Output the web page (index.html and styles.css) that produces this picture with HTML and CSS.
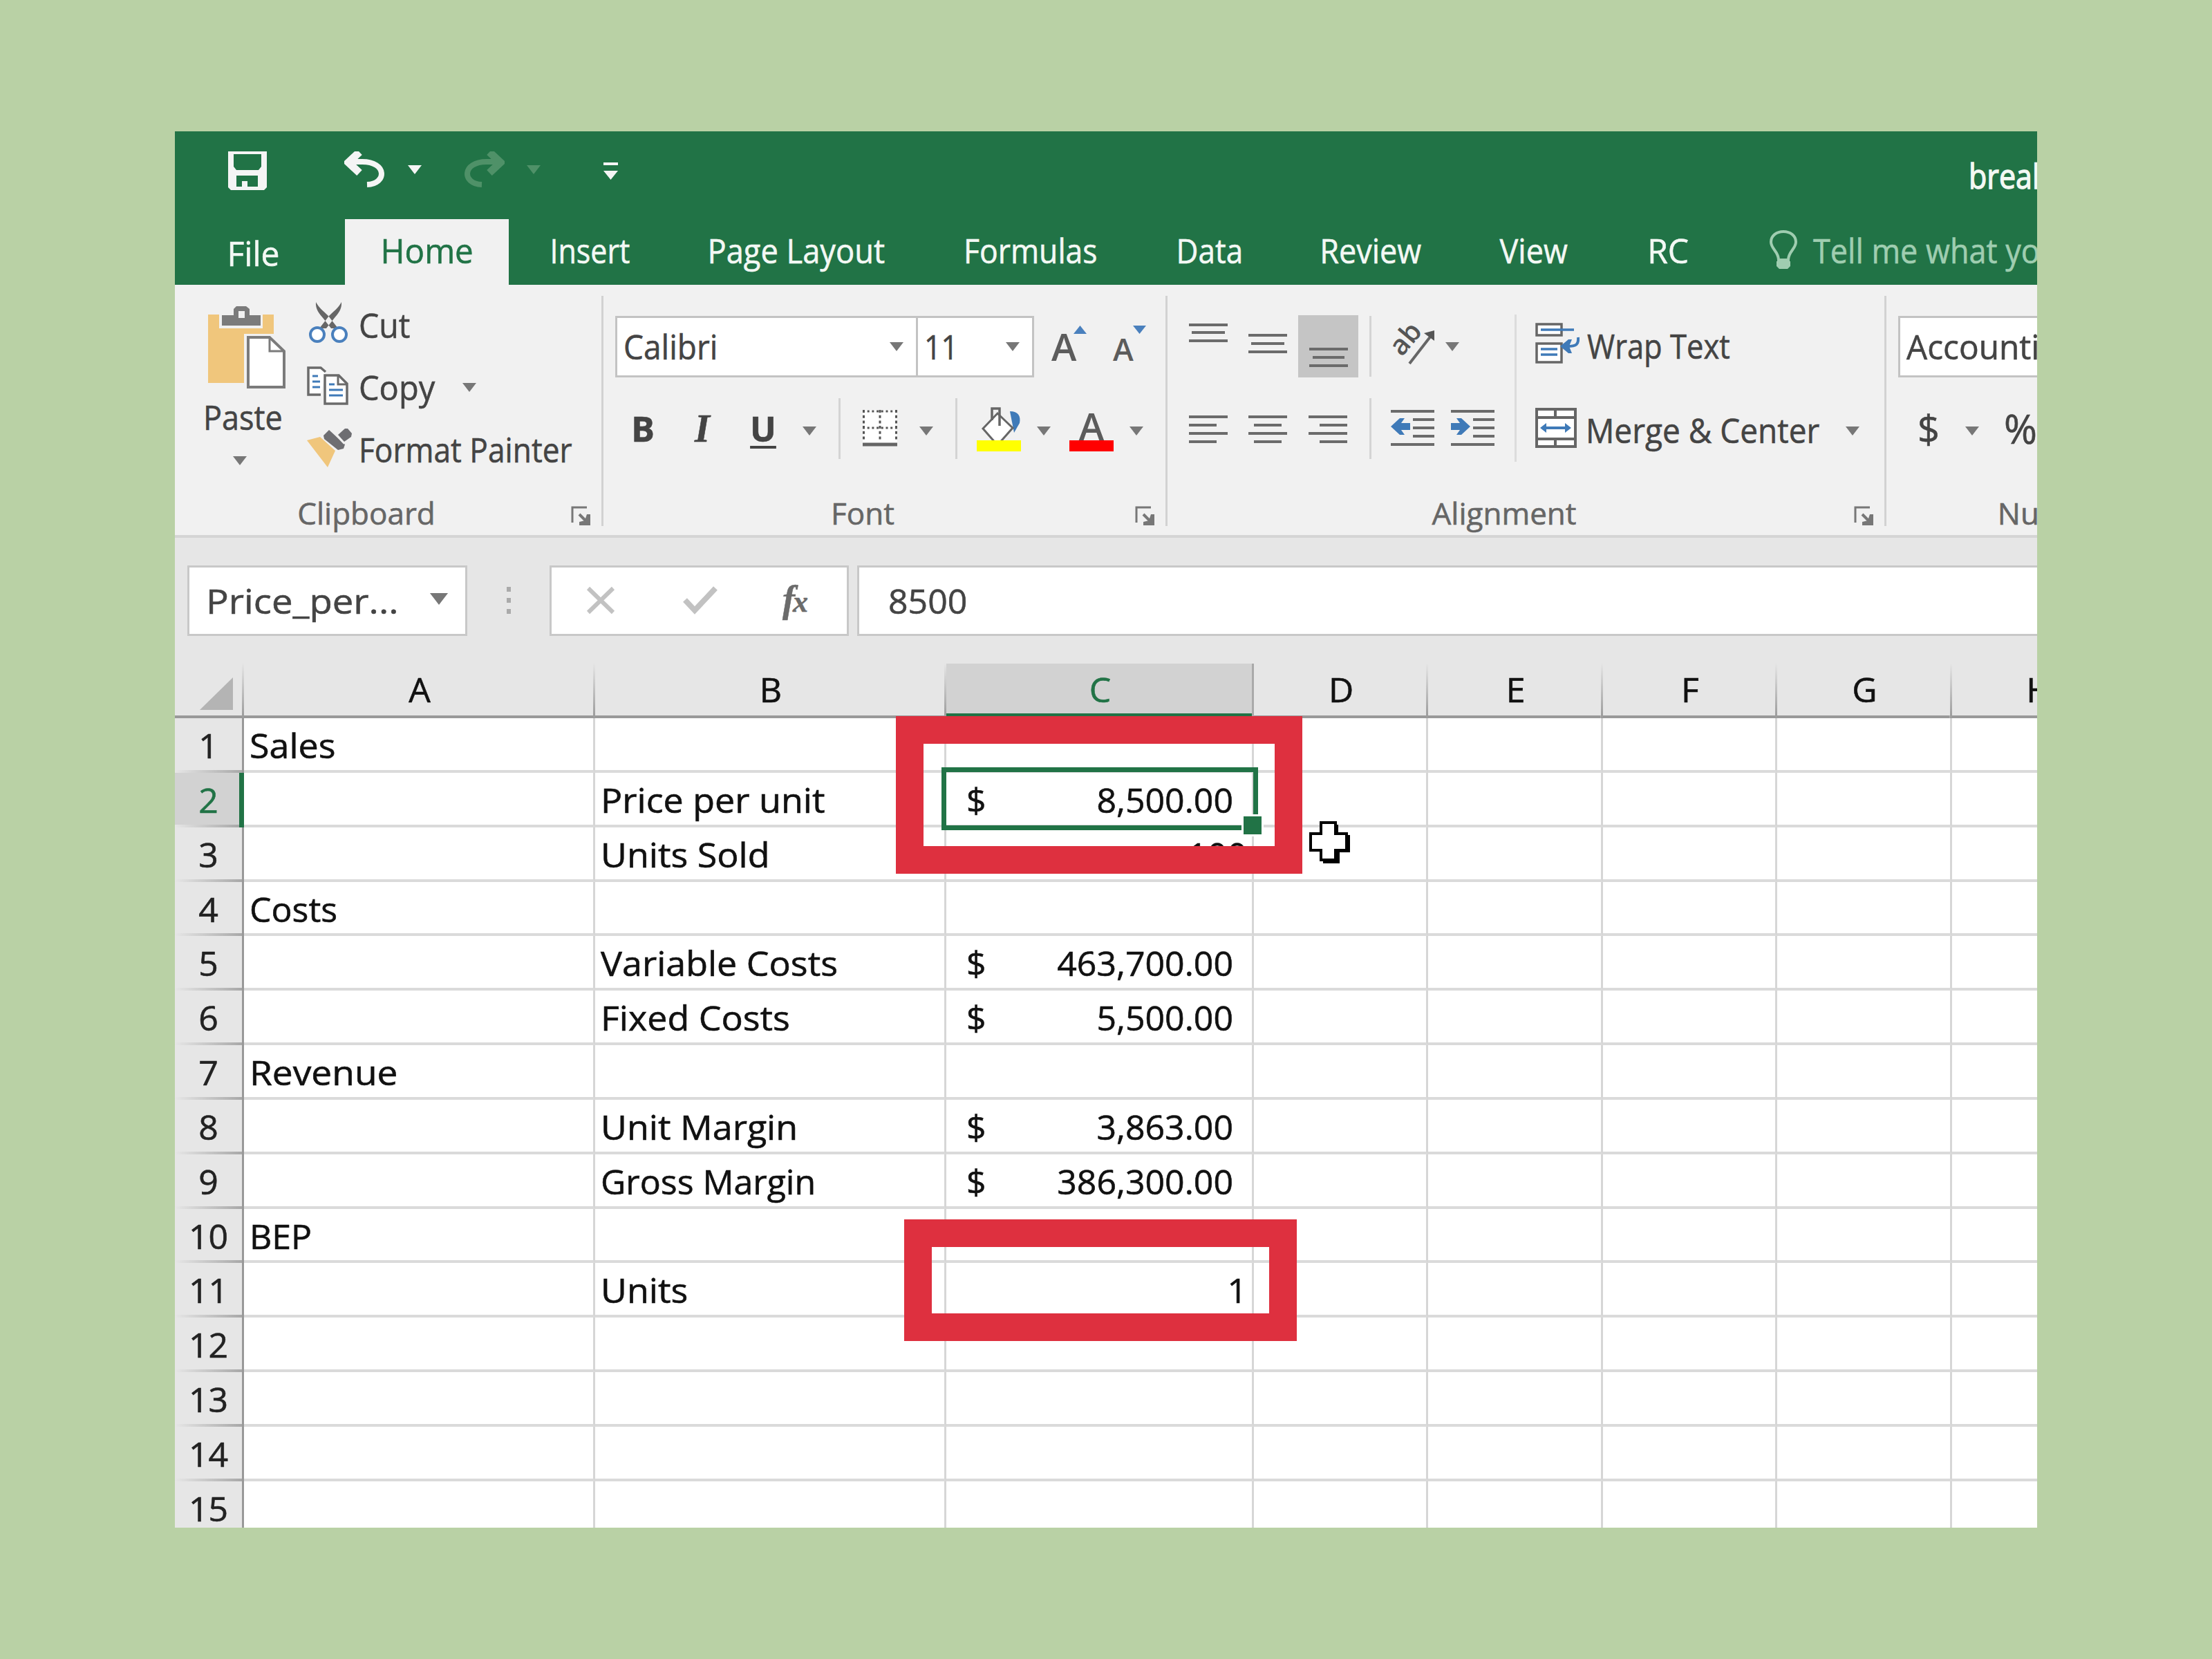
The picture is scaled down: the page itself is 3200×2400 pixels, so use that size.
FILE: index.html
```html
<!DOCTYPE html>
<html lang="en">
<head>
    <meta charset="UTF-8">
    <title>Break-even workbook</title>
    <link rel="stylesheet" href="styles.css">
</head>

<body>
    <svg class="defs" width="0" height="0">
        <symbol id="caret" viewBox="0 0 20 13"><path d="M0 0H20L10 13Z" fill="currentColor"/></symbol>
        <symbol id="launcher" viewBox="0 0 28 28">
            <path d="M2 24V2H23" fill="none" stroke="#777" stroke-width="3"/>
            <path d="M12 12L22 22" stroke="#777" stroke-width="4"/>
            <path d="M28 12V28H12V23L20 21L23 12Z" fill="#777"/>
        </symbol>
    </svg>

    <div class="window">
        <header class="titlebar">
            <div class="qat">
                <svg class="save" width="56" height="56" viewBox="0 0 56 56">
                    <path fill-rule="evenodd" fill="#f5f5f5" d="M0 0H56V52L52 56H4L0 52ZM8 4V22L12 27H44L48 22V4ZM12 35V51H20V43H28V51H43V35Z"/>
                </svg>
                <svg class="undo" width="58" height="52" viewBox="0 0 58 52" fill="none" stroke="#f5f5f5">
                    <path d="M22 1L6 16L22 31" stroke-width="11"/>
                    <path d="M6 15H26C62 15 62 47 33 48" stroke-width="8"/>
                </svg>
                <svg class="caret c1"><use href="#caret"/></svg>
                <svg class="undo redo" width="58" height="52" viewBox="0 0 58 52" fill="none" stroke="#4f9168">
                    <path d="M36 1L52 16L36 31" stroke-width="11"/>
                    <path d="M52 15H32C-4 15 -4 47 25 48" stroke-width="8"/>
                </svg>
                <svg class="caret c2"><use href="#caret"/></svg>
                <svg class="customize" width="22" height="25" viewBox="0 0 22 25" fill="#f5f5f5"><path d="M0 0H21V4H0ZM0 12H21L10.5 25Z"/></svg>
                <span class="doc"><span class="t">break-even</span></span>
            </div>
            <nav class="tabs">
                <a class="tab file"><span class="t">File</span></a>
                <a class="tab home"><span class="t">Home</span></a>
                <a class="tab insert"><span class="t">Insert</span></a>
                <a class="tab layout"><span class="t">Page Layout</span></a>
                <a class="tab formulas"><span class="t">Formulas</span></a>
                <a class="tab data"><span class="t">Data</span></a>
                <a class="tab review"><span class="t">Review</span></a>
                <a class="tab view"><span class="t">View</span></a>
                <a class="tab rc"><span class="t">RC</span></a>
                <svg class="bulb" width="40" height="58" viewBox="0 0 40 58" fill="none" stroke="#9fcdb0" stroke-width="4">
                    <path d="M13 43C13 31 2 27 2 17C2 8 10 2 20 2S38 8 38 17C38 27 27 31 27 43Z"/>
                    <path d="M10 45H30V52L26 56H14L10 52Z" fill="#9fcdb0" stroke="none"/>
                </svg>
                <span class="tell"><span class="t">Tell me what you want to do</span></span>
            </nav>
        </header>

        <section class="ribbon">
            <div class="group clipboard">
                <div class="body">
                    <div class="paste">
                        <svg width="113" height="120" viewBox="0 0 113 120">
                            <path fill="#f0c67c" d="M0 12H16V32H79V12H95V40H52V111H0Z"/>
                            <path fill="#7b7b7b" fill-rule="evenodd" d="M20 13H37V4L41 0H55L60 4V13H76V28H20ZM44 7V17H53V7Z"/>
                            <path fill="#fff" stroke="#7b7b7b" stroke-width="4" d="M58 45H89L110 65V117H58Z"/>
                            <path fill="none" stroke="#7b7b7b" stroke-width="3" d="M89 45V65H110"/>
                        </svg>
                        <span class="t">Paste</span>
                        <svg class="caret"><use href="#caret"/></svg>
                    </div>
                    <div class="edit">
                        <div class="item">
                            <svg width="66" height="90" viewBox="0 0 66 90">
                                <path d="M13 14C12 24 18 31 24 38L35 52H45L31 34C24 27 17 22 13 14ZM50 14C51 24 45 31 39 38L28 52H18L32 34C39 27 46 22 50 14Z" fill="#666"/>
                                <circle cx="15" cy="61" r="10" fill="#fff" stroke="#4a80bd" stroke-width="4"/>
                                <circle cx="47" cy="61" r="10" fill="#fff" stroke="#4a80bd" stroke-width="4"/>
                            </svg>
                            <span class="t cut">Cut</span>
                        </div>
                        <div class="item">
                            <svg width="66" height="90" viewBox="0 0 66 90">
                                <path d="M20 58H2V19H20L27 25" fill="#fff" stroke="#6b6b6b" stroke-width="3.5"/>
                                <path d="M8 31H16M8 39H19M8 47H19" stroke="#3f7ab8" stroke-width="3"/>
                                <path d="M26 30H46L58 42V71H26Z" fill="#fff" stroke="#6b6b6b" stroke-width="3.5"/>
                                <path d="M45 30V43H58" fill="none" stroke="#6b6b6b" stroke-width="3"/>
                                <path d="M32 43H40M32 51H52M32 59H52" stroke="#3f7ab8" stroke-width="3"/>
                            </svg>
                            <span class="t copy">Copy</span>
                            <svg class="caret"><use href="#caret"/></svg>
                        </div>
                        <div class="item">
                            <svg width="66" height="90" viewBox="0 0 66 90">
                                <path d="M0 34L19 29L41 49L30 73Z" fill="#f0c67c"/>
                                <path d="M24 27L32 19L55 40L53 46L45 48L25 32Z" fill="#6e6e72"/>
                                <path d="M45 26L55 17H59L65 24L64 29L54 36Z" fill="#6e6e72"/>
                                <path d="M39 23L54 39" stroke="#f1f1f1" stroke-width="2"/>
                            </svg>
                            <span class="t painter">Format Painter</span>
                        </div>
                    </div>
                </div>
                <div class="footer"><span>Clipboard</span><svg width="28" height="28"><use href="#launcher"/></svg></div>
            </div>

            <div class="group font">
                <div class="row row1">
                    <div class="combo family"><span class="t">Calibri</span><svg class="caret"><use href="#caret"/></svg></div>
                    <div class="combo size"><span class="t">11</span><svg class="caret"><use href="#caret"/></svg></div>
                    <svg class="grow" width="65" height="100" viewBox="0 0 65 100">
                        <text x="5" y="71" class="glyph big">A</text>
                        <path d="M37 32L46.500 20L56 32Z" fill="#4a80bd"/>
                    </svg>
                    <svg class="shrink" width="60" height="100" viewBox="0 0 60 100">
                        <text x="5" y="71" class="glyph small">A</text>
                        <path d="M34 20H53L43.500 32Z" fill="#4a80bd"/>
                    </svg>
                </div>
                <div class="row row2">
                    <b class="btn bold">B</b>
                    <i class="btn italic">I</i>
                    <u class="btn under">U</u>
                    <svg class="caret k1"><use href="#caret"/></svg>
                    <span class="sep s1"></span>
                    <svg class="borders" width="50" height="100" viewBox="0 0 50 100">
                        <rect y="23" width="50" height="48" fill="#fff"/>
                        <path d="M0 25H50M0 49H50" stroke="#555" stroke-width="3" stroke-dasharray="3 3.700"/>
                        <path d="M1.500 23V68M25 23V68M48.500 23V68" stroke="#555" stroke-width="3" stroke-dasharray="4 3.700"/>
                        <path d="M0 73H50" stroke="#666" stroke-width="5"/>
                    </svg>
                    <svg class="caret k1"><use href="#caret"/></svg>
                    <span class="sep s1"></span>
                    <svg class="fill" width="64" height="100" viewBox="0 0 64 100">
                        <path d="M48 25C60 25 64 32 62 42L54 56Z" fill="#3f7ab8"/>
                        <path d="M30 28L52 49L30 74L9 50Z" fill="#fff" stroke="#666" stroke-width="3"/>
                        <path d="M22 38V21H33V46" fill="none" stroke="#666" stroke-width="3.500"/>
                        <rect y="67" width="64" height="16" fill="#ff0"/>
                    </svg>
                    <svg class="caret k2"><use href="#caret"/></svg>
                    <svg class="color" width="64" height="100" viewBox="0 0 64 100">
                        <text x="32" y="67" text-anchor="middle" class="glyph big">A</text>
                        <rect y="67" width="64" height="16" fill="#f00"/>
                    </svg>
                    <svg class="caret k2"><use href="#caret"/></svg>
                </div>
                <div class="footer"><span>Font</span><svg width="28" height="28"><use href="#launcher"/></svg></div>
            </div>

            <div class="group alignment">
                <div class="body">
                    <div class="align">
                        <div class="row row1">
                            <svg class="a1" width="56" height="100" viewBox="0 0 56 100"><path class="line" d="M0 19H56M4 30H52M0 42H56"/></svg>
                            <svg class="a2" width="56" height="100" viewBox="0 0 56 100"><path class="line" d="M0 34H56M4 46H52M0 58H56"/></svg>
                            <span class="pressed"><svg width="56" height="90" viewBox="0 0 56 90"><path class="line" d="M0 49H56M5 61H51M0 73H56"/></svg></span>
                            <span class="sep s2"></span>
                            <svg class="orient" width="70" height="100" viewBox="0 0 70 100">
                                <text transform="translate(20 66) rotate(-50)" class="ab">ab</text>
                                <path d="M31 75L62 35" stroke="#666" stroke-width="4"/>
                                <path d="M52 31L67 27V42Z" fill="#555"/>
                            </svg>
                            <svg class="caret k3"><use href="#caret"/></svg>
                        </div>
                        <div class="row row2">
                            <svg class="a1" width="56" height="100" viewBox="0 0 56 100"><path class="line" d="M0 33H56M0 45H40M0 57H56M0 69H40"/></svg>
                            <svg class="a2" width="56" height="100" viewBox="0 0 56 100"><path class="line" d="M0 33H56M8 45H48M0 57H56M8 69H48"/></svg>
                            <svg class="a1" width="56" height="100" viewBox="0 0 56 100"><path class="line" d="M0 33H56M16 45H56M0 57H56M16 69H56"/></svg>
                            <span class="sep s1"></span>
                            <svg class="outdent" width="63" height="100" viewBox="0 0 63 100">
                                <path class="line" d="M0 25H63M32 37H63M32 49H63M32 61H63M0 73H63"/>
                                <path d="M0 47L13 35H20L15 42H28V52H15L20 59H13Z" fill="#3f7ab8"/>
                            </svg>
                            <svg class="indent" width="63" height="100" viewBox="0 0 63 100">
                                <path class="line" d="M0 25H63M32 37H63M32 49H63M32 61H63M0 73H63"/>
                                <path d="M28 47L15 35H8L13 42H0V52H13L8 59H15Z" fill="#3f7ab8"/>
                            </svg>
                        </div>
                    </div>
                    <div class="cells">
                        <div class="row row1">
                            <svg class="icon" width="64" height="100" viewBox="0 0 64 100">
                                <path d="M2 18H38V34H2ZM2 46H38V73H2Z" fill="#fff" stroke="#666" stroke-width="3.500"/>
                                <path d="M8 26H56M8 54H32M8 62H32" stroke="#3f7ab8" stroke-width="3.500"/>
                                <path d="M62 37C63 47 60 50 46 50" fill="none" stroke="#3f7ab8" stroke-width="4"/>
                                <path d="M36 50L48 40H53L49 50L53 60H48Z" fill="#3f7ab8"/>
                            </svg>
                            <span class="t wrap">Wrap Text</span>
                        </div>
                        <div class="row row2">
                            <svg class="icon" width="64" height="100" viewBox="0 0 64 100">
                                <path d="M2 22H58V76H2ZM2 34H58M2 65H58M29 22V34M29 65V76" fill="#fff" stroke="#666" stroke-width="4"/>
                                <path d="M10 49H49" stroke="#3f7ab8" stroke-width="4"/>
                                <path d="M7 49L16 42V56ZM52 49L43 42V56Z" fill="#3f7ab8"/>
                            </svg>
                            <span class="t merge">Merge &amp; Center</span>
                            <svg class="caret k4"><use href="#caret"/></svg>
                        </div>
                    </div>
                </div>
                <div class="footer"><span>Alignment</span><svg width="28" height="28"><use href="#launcher"/></svg></div>
            </div>

            <div class="group number">
                <div class="row row1">
                    <div class="combo format"><span class="t">Accounting</span></div>
                </div>
                <div class="row row2">
                    <span class="btn dollar">$</span>
                    <svg class="caret k5"><use href="#caret"/></svg>
                    <span class="btn percent">%</span>
                </div>
                <div class="footer"><span>Number</span></div>
            </div>
        </section>

        <section class="formulabar">
            <div class="namebox"><span class="t">Price_per...</span><svg class="caret"><use href="#caret"/></svg></div>
            <svg class="dots" width="6" height="40" viewBox="0 0 6 40" fill="#aaa"><path d="M0 0H6V7H0ZM0 16H6V23H0ZM0 32H6V39H0Z"/></svg>
            <div class="fxbox">
                <svg width="42" height="42" viewBox="0 0 42 42" fill="none" stroke="#c2c2c2" stroke-width="6"><path d="M3 3L39 38M39 3L3 38"/></svg>
                <svg class="check" width="50" height="42" viewBox="0 0 50 42" fill="none" stroke="#c2c2c2" stroke-width="8"><path d="M3 20L17 35L47 3"/></svg>
                <span class="fx">f<small>x</small></span>
            </div>
            <div class="formula">8500</div>
        </section>

        <main class="sheet">
            <div class="head corner"><svg width="48" height="47" viewBox="0 0 48 47"><path d="M48 0V47H0Z" fill="#b4b4b4"/></svg></div>
            <div class="head">A</div><div class="head">B</div><div class="head active">C</div><div class="head">D</div><div class="head">E</div><div class="head">F</div><div class="head">G</div><div class="head">H</div>

            <div class="num">1</div><div><span class="t">Sales</span></div><div></div><div></div><div></div><div></div><div></div><div></div><div></div>
            <div class="num active">2</div><div></div><div><span class="t">Price per unit</span></div><div class="money selected"><span>$</span><span>8,500.00</span></div><div></div><div></div><div></div><div></div><div></div>
            <div class="num">3</div><div></div><div><span class="t">Units Sold</span></div><div class="value">100</div><div></div><div></div><div></div><div></div><div></div>
            <div class="num">4</div><div><span class="t tight">Costs</span></div><div></div><div></div><div></div><div></div><div></div><div></div><div></div>
            <div class="num">5</div><div></div><div><span class="t">Variable Costs</span></div><div class="money"><span>$</span><span>463,700.00</span></div><div></div><div></div><div></div><div></div><div></div>
            <div class="num">6</div><div></div><div><span class="t">Fixed Costs</span></div><div class="money"><span>$</span><span>5,500.00</span></div><div></div><div></div><div></div><div></div><div></div>
            <div class="num">7</div><div><span class="t wide">Revenue</span></div><div></div><div></div><div></div><div></div><div></div><div></div><div></div>
            <div class="num">8</div><div></div><div><span class="t">Unit Margin</span></div><div class="money"><span>$</span><span>3,863.00</span></div><div></div><div></div><div></div><div></div><div></div>
            <div class="num">9</div><div></div><div><span class="t tight">Gross Margin</span></div><div class="money"><span>$</span><span>386,300.00</span></div><div></div><div></div><div></div><div></div><div></div>
            <div class="num">10</div><div><span class="t tight">BEP</span></div><div></div><div></div><div></div><div></div><div></div><div></div><div></div>
            <div class="num">11</div><div></div><div><span class="t">Units</span></div><div class="value">1</div><div></div><div></div><div></div><div></div><div></div>
            <div class="num">12</div><div></div><div></div><div></div><div></div><div></div><div></div><div></div><div></div>
            <div class="num">13</div><div></div><div></div><div></div><div></div><div></div><div></div><div></div><div></div>
            <div class="num">14</div><div></div><div></div><div></div><div></div><div></div><div></div><div></div><div></div>
            <div class="num">15</div><div></div><div></div><div></div><div></div><div></div><div></div><div></div><div></div>
        </main>

        <!-- callouts and pointer over the sheet -->
        <div class="callout price"></div>
        <div class="callout units"></div>
        <svg class="pointer" width="60" height="61" viewBox="0 0 60 61">
            <path d="M21 5H42V20H59V45H44V61H20V45Z" fill="#000"/>
            <path d="M17 2H38V18H54V42H38V56H17V42H2V18H17Z" fill="#fff" stroke="#000" stroke-width="4"/>
        </svg>
    </div>
</body>
</html>
```

FILE: styles.css
```css
* {
    box-sizing: border-box;
    margin: 0;
    padding: 0;
}

body {
    width: 3200px;
    height: 2400px;
    overflow: hidden;
    padding: 190px 253px;
    background: #b9d1a5;
    font-family: "Open Sans", "Noto Sans", sans-serif;
    font-size: 50px;
    color: #444;
    -webkit-text-stroke: .6px;
}

svg {
    display: block;
    flex: none;
}

.defs {
    position: absolute;
}

.window {
    position: relative;
    width: 2694px;
    height: 2020px;
    overflow: hidden;
    background: #e6e6e6;
}

.t {
    display: inline-block;
    flex: none;
    white-space: nowrap;
    transform: scaleX(var(--sx, .9));
    transform-origin: left;
}

.caret {
    width: 20px;
    height: 13px;
    color: #777;
}

/* title bar */
.titlebar {
    height: 222px;
    background: #217346;
    color: #f3f8f4;
}

.qat {
    display: flex;
    align-items: center;
    height: 127px;
    padding: 0 0 13px 77px;
}

.undo { margin: -4px 0 0 112px; }
.redo { margin-left: 62px; }
.c1 { margin-left: 34px; margin-top: -3px; color: #f5f5f5; }
.c2 { margin-left: 32px; margin-top: -3px; color: #4f9168; }
.customize { margin-left: 91px; }

.doc {
    --sx: .86;
    width: 99px;
    margin-left: auto;
    margin-top: 14px;
    overflow: hidden;
    -webkit-text-stroke-width: 1.4px;
}

.tabs {
    display: flex;
    height: 95px;
    line-height: 91px;
}

.tab {
    flex: none;
    text-align: center;
}

.tab .t { transform-origin: center; }
.file { --sx: .96; width: 246px; padding-right: 19px; line-height: 98px; }
.home { --sx: .95; width: 237px; background: #f1f1f1; color: #217346; }
.insert { --sx: .86; width: 234px; }
.layout { --sx: .905; width: 364px; }
.formulas { --sx: .89; width: 314px; }
.data { --sx: .88; width: 203px; }
.review { width: 264px; }
.view { width: 208px; }
.rc { --sx: .96; width: 180px; }
.bulb { margin: 16px 0 0 57px; }

.tell {
    flex: none;
    margin-left: 23px;
    color: #9fcdb0;
}

/* ribbon */
.ribbon {
    display: flex;
    height: 366px;
    background: #f1f1f1;
    border-bottom: 4px solid #d5d5d5;
}

.group {
    position: relative;
    display: flex;
    flex-direction: column;
    flex: none;
    background: linear-gradient(#d2d2d2, #d2d2d2) right 16px / 3px 333px no-repeat;
}

.clipboard { width: 620px; }
.font { width: 816px; }
.alignment { width: 1040px; }
.number { width: 492px; background: none; }

.body {
    display: flex;
}

.footer {
    display: flex;
    align-items: flex-start;
    height: 54px;
    margin-top: auto;
    font-size: 44px;
    line-height: 45px;
    color: #666;
}

.footer span {
    flex: 1;
    text-align: center;
}

.footer svg {
    margin: 12px 19px 0 19px;
}

.paste {
    width: 148px;
    padding: 31px 0 0;
    margin-left: 43px;
    line-height: 50px;
}

.paste > svg:first-child { margin: 0 0 15px 5px; }
.paste .t { margin-left: -2px; }
.paste .caret { margin: 32px 0 0 41px; }

.edit {
    padding-top: 11px;
}

.item {
    display: flex;
    align-items: center;
    height: 90px;
    line-height: 90px;
}

.item .t { margin: 4px 0 0 9px; }
.cut { --sx: .93; }
.copy { --sx: .94; }
.painter { --sx: .885; }
.item .caret { margin-left: 33px; margin-top: 4px; }

.row {
    display: flex;
    align-items: center;
    height: 100px;
}

.row1 { margin-top: 39px; }
.row2 { margin-top: 19px; }

.row2 .caret { margin-top: 6px; }

.combo {
    display: flex;
    align-items: center;
    justify-content: space-between;
    flex: none;
    height: 89px;
    padding: 0 18px 0 9px;
    border: 3px solid #c3c3c3;
    background: #fff;
    line-height: 82px;
}

.family { --sx: .92; width: 438px; margin-left: 17px; }
.size { --sx: .86; width: 171px; margin-left: -3px; }
.format { --sx: .955; width: 400px; margin-left: 17px; }

.grow { margin-left: 20px; }
.shrink { margin-left: 24px; }

.glyph {
    font-weight: 600;
    fill: #5c5c5c;
}

.big { font-size: 55px; }
.small { font-size: 45px; }

.btn {
    flex: none;
    width: 50px;
    text-align: center;
    line-height: 96px;
}

.bold { margin-left: 32px; }

.italic {
    margin-left: 36px;
    font-family: "Liberation Serif", serif;
    font-size: 56px;
    font-weight: bold;
}

.under {
    margin-left: 38px;
    font-weight: bold;
    text-decoration-thickness: 4px;
    text-underline-offset: 6px;
}

.k1, .s1, .borders { margin-left: 32px; }
.fill { margin-left: 28px; }
.k2 { margin-left: 23px; }
.color { margin-left: 27px; }

.sep {
    flex: none;
    width: 3px;
    height: 88px;
    background: #d4d4d4;
}

.align {
    width: 502px;
}

.line {
    fill: none;
    stroke: #6b6b6b;
    stroke-width: 4;
}

.a1 { margin-left: 31px; }
.a2 { margin-left: 30px; }

.pressed {
    display: flex;
    justify-content: center;
    flex: none;
    width: 87px;
    height: 90px;
    margin-left: 16px;
    background: #c5c5c5;
}

.s2 { margin-left: 16px; }
.orient { margin-left: 24px; }

.ab {
    font-size: 40px;
    font-weight: 600;
    fill: #555;
}

.k3 { margin-left: 13px; }
.outdent { margin-left: 28px; }
.indent { margin-left: 24px; }

.cells {
    flex: 1;
    background: linear-gradient(#dcdcdc, #dcdcdc) 0 43px / 3px 213px no-repeat;
}

.icon { margin-left: 30px; }

.wrap {
    --sx: .87;
    margin: -3px 0 0 11px;
}

.merge {
    --sx: .92;
    width: 370px;
    margin: 4px 0 0 9px;
}

.k4 { margin-left: 6px; }
.dollar { margin-left: 36px; font-size: 56px; }
.k5 { margin-left: 28px; }
.percent { margin-left: 36px; font-size: 58px; text-align: left; line-height: 100px; }

/* formula bar */
.formulabar {
    display: flex;
    align-items: center;
    height: 182px;
    padding-left: 18px;
}

.namebox,
.fxbox,
.formula {
    display: flex;
    align-items: center;
    flex: none;
    height: 102px;
    border: 3px solid #c8c8c8;
    background: #fff;
    line-height: 96px;
}

.namebox {
    --sx: 1.09;
    width: 405px;
    padding: 0 24px 0 24px;
    justify-content: space-between;
}

.namebox .caret { width: 28px; height: 17px; margin-top: -6px; }

.dots { margin-left: 57px; }

.fxbox {
    width: 433px;
    margin-left: 56px;
    padding-left: 50px;
}

.check { margin-left: 98px; }

.fx {
    margin-left: 94px;
    font-family: "Liberation Serif", serif;
    font-style: italic;
    font-weight: bold;
    font-size: 54px;
    color: #6b6b6b;
}

.fx small { font-size: 44px; margin-left: -3px; }

.formula {
    width: 1800px;
    margin-left: 12px;
    padding-left: 42px;
}

/* sheet */
.sheet {
    display: grid;
    grid-template-columns: 100px 508px 508px 445px repeat(5, 252.4px);
    grid-template-rows: 79px;
    grid-auto-rows: 78.85px;
    width: 2823px;
    color: #111;
    line-height: 79px;
}

.sheet > div {
    border-right: 3px solid #d6d6d6;
    border-bottom: 4px solid #dadada;
    background: #fff;
    padding-left: 8px;
}

.sheet .t { --sx: 1.04; }
.sheet .tight { --sx: 1; }
.sheet .wide { --sx: 1.065; }

.sheet .head {
    border-right: 3px solid;
    border-image: linear-gradient(#e6e6e6, #999) 1;
    border-width: 0 3px 0 0;
    padding: 0 0 0 3px;
    background: linear-gradient(#999, #999) bottom / 100% 4px no-repeat #e6e6e6;
    text-align: center;
    line-height: 74px;
}

.sheet .corner {
    padding: 20px 0 0 36px;
}

.sheet .head.active {
    background: linear-gradient(#217346, #217346) bottom / 100% 7px no-repeat #d2d2d2;
    border-image: none;
    border-color: #aaa;
    color: #217346;
}

.sheet .num {
    padding: 0;
    border-right-color: #999;
    background: linear-gradient(90deg, #e6e6e6, #a8a8a8) bottom / 100% 4px no-repeat #e6e6e6;
    border-bottom: 0;
    text-align: center;
    color: #222;
}

.sheet .num.active {
    padding-left: 4px;
    border-right: 7px solid #217346;
    background-color: #d2d2d2;
    color: #217346;
}

.sheet .money {
    display: flex;
    justify-content: space-between;
    padding: 0 27px 0 29px;
}

.sheet .value {
    padding-right: 7px;
    text-align: right;
}

.selected {
    position: relative;
}

.selected::before {
    content: "";
    position: absolute;
    inset: -8px -9px -8px -7px;
    border: 7px solid #217346;
}

.selected::after {
    content: "";
    position: absolute;
    right: -17px;
    bottom: -17px;
    width: 26px;
    height: 26px;
    border: 3px solid #fff;
    background: #217346;
}

.callout {
    position: absolute;
    border: 40px solid #de303f;
}

.price {
    left: 1043px;
    top: 846px;
    width: 588px;
    height: 228px;
}

.units {
    left: 1055px;
    top: 1574px;
    width: 568px;
    height: 176px;
}

.pointer {
    position: absolute;
    left: 1641px;
    top: 998px;
}
```
